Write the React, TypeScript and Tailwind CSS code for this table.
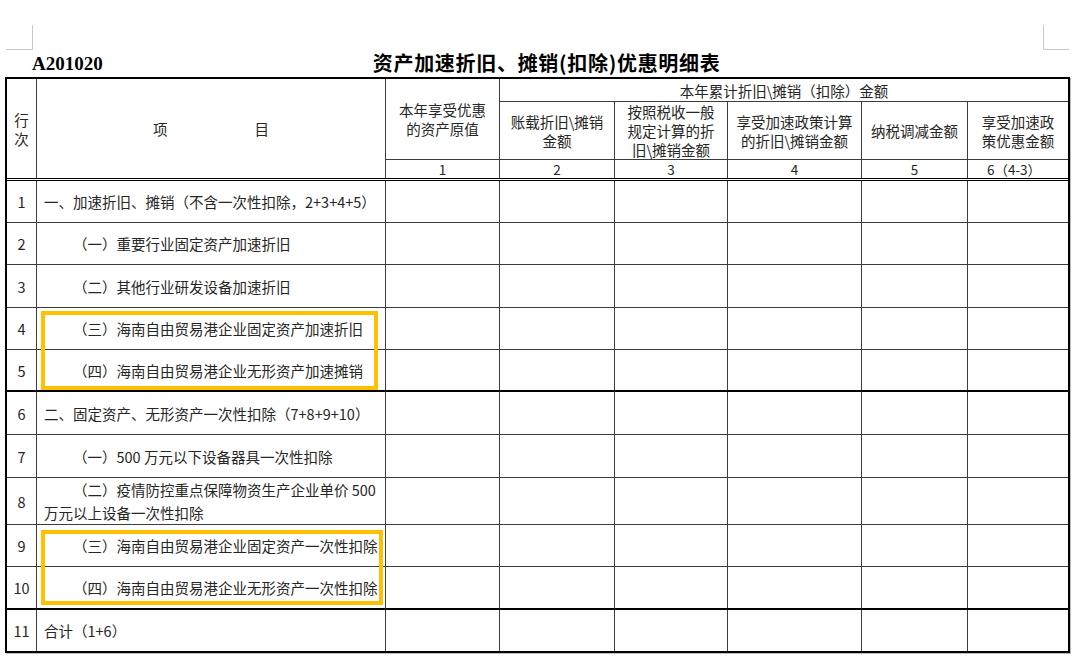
import React from "react";

const COLS =
  "grid grid-cols-[30px_349px_114px_115px_113px_134px_106px_100px]";
const LINE = "border-[#3c3c3c]";

function EmptyCells() {
  return (
    <>
      <div className={`border-r ${LINE}`} />
      <div className={`border-r ${LINE}`} />
      <div className={`border-r ${LINE}`} />
      <div className={`border-r ${LINE}`} />
      <div className={`border-r ${LINE}`} />
      <div />
    </>
  );
}

function Row({
  n,
  children,
  indent,
  rowClass,
  textClass,
}: {
  n: string;
  children: React.ReactNode;
  indent?: boolean;
  rowClass: string;
  textClass?: string;
}) {
  return (
    <div className={`${COLS} ${rowClass}`}>
      <div className={`border-r ${LINE} flex items-center justify-center`}>
        {n}
      </div>
      <div
        className={`border-r ${LINE} flex items-center pl-[7px] pr-[4px] ${
          textClass ?? ""
        }`}
      >
        <p className={indent ? "indent-[29px]" : ""}>{children}</p>
      </div>
      <EmptyCells />
    </div>
  );
}

export default function App() {
  return (
    <div className="w-[1080px] h-[666px] bg-white text-[#262626] font-['Noto_Sans_CJK_SC',sans-serif] text-[14.5px] leading-[19px]">
      {/* page corner marks */}
      <div className="flex justify-between pt-[25px] pl-[6px] pr-[11px]">
        <div className="w-[27px] h-[25px] border-r border-b border-[#c8c8c8]" />
        <div className="w-[26px] h-[25px] border-l border-b border-[#c8c8c8]" />
      </div>

      {/* title row */}
      <div className="flex items-center h-[27px] text-black">
        <div className="ml-[32px] font-['Liberation_Serif',serif] font-bold text-[19px] leading-[22px]">
          A201020
        </div>
        <div className="ml-[270px] font-bold text-[20px] tracking-[0.7px] leading-[24px] font-['Noto_Sans_CJK_SC',sans-serif] -translate-y-px">
          资产加速折旧、摊销(扣除)优惠明细表
        </div>
      </div>

      {/* table */}
      <div className="ml-[5px] w-[1065px] border-2 border-black shadow-[1px_1px_0_0_#bdbdbd]">
        {/* header */}
        <div
          className={`${COLS} grid-rows-[23px_58px_18px] border-b-[3px] border-double border-black`}
        >
          <div
            className={`row-span-3 border-r border-solid ${LINE} flex flex-col items-center justify-center`}
          >
            <span>行</span>
            <span>次</span>
          </div>
          <div
            className={`row-span-3 border-r border-solid ${LINE} flex items-center justify-center gap-[87px]`}
          >
            <span>项</span>
            <span>目</span>
          </div>
          <div
            className={`row-span-2 border-r border-b border-solid ${LINE} flex items-center justify-center text-center`}
          >
            本年享受优惠
            <br />
            的资产原值
          </div>
          <div
            className={`col-span-5 border-b border-solid ${LINE} flex items-center justify-center`}
          >
            本年累计折旧{"\\"}摊销（扣除）金额
          </div>
          <div
            className={`border-r border-b border-solid ${LINE} flex items-center justify-center text-center`}
          >
            <p>
              账载折旧{"\\"}摊销
              <br />
              金额
            </p>
          </div>
          <div
            className={`border-r border-b border-solid ${LINE} flex items-center justify-center text-center`}
          >
            <p>
              按照税收一般
              <br />
              规定计算的折
              <br />旧{"\\"}摊销金额
            </p>
          </div>
          <div
            className={`border-r border-b border-solid ${LINE} flex items-center justify-center text-center`}
          >
            <p>
              享受加速政策计算
              <br />
              的折旧{"\\"}摊销金额
            </p>
          </div>
          <div
            className={`border-r border-b border-solid ${LINE} flex items-center justify-center text-center`}
          >
            纳税调减金额
          </div>
          <div
            className={`border-b border-solid ${LINE} flex items-center justify-center text-center`}
          >
            <p>
              享受加速政
              <br />
              策优惠金额
            </p>
          </div>
          <div
            className={`border-r border-solid ${LINE} flex items-center justify-center text-[13.5px]`}
          >
            1
          </div>
          <div
            className={`border-r border-solid ${LINE} flex items-center justify-center text-[13.5px]`}
          >
            2
          </div>
          <div
            className={`border-r border-solid ${LINE} flex items-center justify-center text-[13.5px]`}
          >
            3
          </div>
          <div
            className={`border-r border-solid ${LINE} flex items-center justify-center text-[13.5px]`}
          >
            4
          </div>
          <div
            className={`border-r border-solid ${LINE} flex items-center justify-center text-[13.5px]`}
          >
            5
          </div>
          <div className="flex items-center justify-center text-[13.5px] pr-[8px]">
            6（4-3）
          </div>
        </div>

        {/* rows 1-5 */}
        <div className="border-b-2 border-black">
          <Row n="1" rowClass={`h-[42px] border-b ${LINE}`}>
            一、加速折旧、摊销（不含一次性扣除，2+3+4+5）
          </Row>
          <Row n="2" indent rowClass={`h-[42px] border-b ${LINE}`}>
            （一）重要行业固定资产加速折旧
          </Row>
          <Row n="3" indent rowClass={`h-[43px] border-b ${LINE}`}>
            （二）其他行业研发设备加速折旧
          </Row>
          <div className="relative">
            <Row n="4" indent rowClass={`h-[42px] border-b ${LINE}`}>
              （三）海南自由贸易港企业固定资产加速折旧
            </Row>
            <Row n="5" indent rowClass="h-[40px]">
              （四）海南自由贸易港企业无形资产加速摊销
            </Row>
            <div className="pointer-events-none absolute left-[34px] top-[3px] w-[337px] h-[79px] border-4 border-[#ffc000]" />
          </div>
        </div>

        {/* rows 6-10 */}
        <div className="border-b-2 border-black">
          <Row n="6" rowClass={`h-[43px] border-b ${LINE}`}>
            二、固定资产、无形资产一次性扣除（7+8+9+10）
          </Row>
          <Row n="7" indent rowClass={`h-[43px] border-b ${LINE}`}>
            （一）500 万元以下设备器具一次性扣除
          </Row>
          <Row
            n="8"
            indent
            rowClass={`h-[47px] border-b ${LINE}`}
            textClass="leading-[23px]"
          >
            （二）疫情防控重点保障物资生产企业单价 500
            <br />
            万元以上设备一次性扣除
          </Row>
          <div className="relative">
            <Row n="9" indent rowClass={`h-[42px] border-b ${LINE}`}>
              （三）海南自由贸易港企业固定资产一次性扣除
            </Row>
            <Row n="10" indent rowClass="h-[41px]">
              （四）海南自由贸易港企业无形资产一次性扣除
            </Row>
            <div className="pointer-events-none absolute left-[34px] top-[5px] w-[342px] h-[75px] border-4 border-[#ffc000]" />
          </div>
        </div>

        {/* row 11 */}
        <Row n="11" rowClass="h-[41px]">
          合计（1+6）
        </Row>
      </div>
    </div>
  );
}
